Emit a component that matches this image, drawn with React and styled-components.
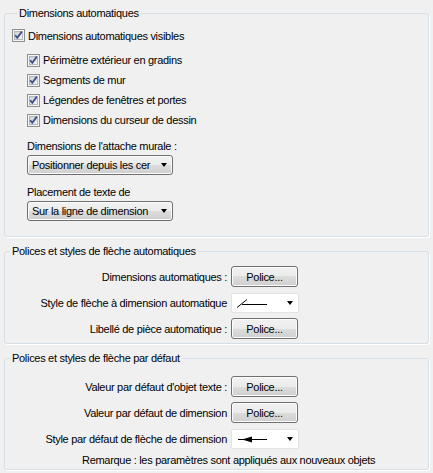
import React from 'react';
import styled, { createGlobalStyle } from 'styled-components';

const GlobalStyle = createGlobalStyle`
  body {
    margin: 0;
    background: #f0f0f0;
    font-family: "Liberation Sans", Arial, sans-serif;
    font-size: 11px;
    letter-spacing: -0.3px;
    color: #000;
  }
`;

const Page = styled.div`
  width: 433px;
  height: 473px;
  box-sizing: border-box;
  padding: 6px 4px 0 4px;
  display: flex;
  flex-direction: column;
  gap: 7px;
`;

const Group = styled.fieldset`
  margin: 0;
  min-width: 0;
  padding: ${p => p.$pad};
  border: 1px solid #d5dfe5;
  border-radius: 3px;
  box-shadow: 1px 1px 0 #fff;
`;

const Legend = styled.legend`
  margin-left: 5px;
  padding: 0 2px;
  line-height: 14px;
`;

const CheckRow = styled.div`
  display: flex;
  align-items: center;
  gap: 3px;
  height: ${p => p.$h}px;
  line-height: 14px;
`;

const SubList = styled.div`
  margin: 6px 0 0 15px;
`;

const FieldLabel = styled.div`
  margin: ${p => p.$top}px 0 0 15px;
  line-height: 14px;
`;

const Select = styled.div`
  margin: 2px 0 0 15px;
  width: 146px;
  height: 20px;
  box-sizing: border-box;
  display: flex;
  align-items: center;
  padding: 0 5px 0 4px;
  border: 1px solid #707070;
  border-radius: 3px;
  background: linear-gradient(#f2f2f2 0%, #ebebeb 50%, #dddddd 50%, #cfcfcf 100%);
  box-shadow: inset 0 0 0 1px #fcfcfc;
`;

const SelectText = styled.span`
  flex: 1;
  overflow: hidden;
  white-space: nowrap;
`;

const Arrow = styled.span`
  width: 0;
  height: 0;
  border-left: 3.5px solid transparent;
  border-right: 3.5px solid transparent;
  border-top: 4px solid #000;
  margin-left: 4px;
`;

const FormRows = styled.div`
  display: flex;
  flex-direction: column;
  gap: 5px;
`;

const FormRow = styled.div`
  display: flex;
  align-items: center;
  height: 21px;
`;

const RowLabel = styled.div`
  width: 226px;
  padding-right: 4px;
  box-sizing: border-box;
  text-align: right;
  white-space: nowrap;
`;

const Button = styled.div`
  width: 67px;
  height: 21px;
  box-sizing: border-box;
  display: flex;
  align-items: center;
  justify-content: center;
  border: 1px solid #707070;
  border-radius: 3px;
  background: linear-gradient(#f2f2f2 0%, #ebebeb 50%, #dddddd 50%, #cfcfcf 100%);
  box-shadow: inset 0 0 0 1px #fcfcfc;
`;

const Combo = styled.div`
  width: 68px;
  height: 20px;
  box-sizing: border-box;
  display: flex;
  align-items: center;
  justify-content: space-between;
  padding: 0 5px 0 3px;
  background: #fff;
  border: 1px solid #e2e3e4;
  border-radius: 2px;
`;

const Note = styled.div`
  margin-top: 4px;
  padding-left: 77px;
  line-height: 14px;
`;

const CheckBox = () => (
  <svg width="13" height="13" viewBox="0 0 13 13">
    <defs>
      <linearGradient id="cbfill" x1="0" y1="0" x2="1" y2="1">
        <stop offset="0" stopColor="#cbcfd5" />
        <stop offset="1" stopColor="#f7f7f7" />
      </linearGradient>
    </defs>
    <rect x="0.5" y="0.5" width="12" height="12" fill="#f4f4f4" stroke="#8e8f8f" />
    <rect x="2.5" y="2.5" width="8" height="8" fill="url(#cbfill)" stroke="#b3b8bf" />
    <path d="M3.2 6.2 L5.3 8.8 L9.8 2.6" stroke="#3c4f8a" strokeWidth="1.8" fill="none" />
  </svg>
);

const Check = ({ h, children }) => (
  <CheckRow $h={h}>
    <CheckBox />
    <span>{children}</span>
  </CheckRow>
);

const TickLine = () => (
  <svg width="34" height="18" viewBox="0 0 34 18">
    <path d="M2 13.5 L12 5.5" stroke="#000" strokeWidth="1" fill="none" />
    <path d="M7 10.5 H32" stroke="#000" strokeWidth="1" fill="none" />
  </svg>
);

const ArrowLine = () => (
  <svg width="34" height="18" viewBox="0 0 34 18">
    <path d="M3 9.5 H32" stroke="#000" strokeWidth="1" fill="none" />
    <path d="M7 9.5 L17 6.5 L17 12.5 Z" fill="#000" />
  </svg>
);

const SubChecks = [
  'Périmètre extérieur en gradins',
  'Segments de mur',
  'Légendes de fenêtres et portes',
  'Dimensions du curseur de dessin',
];

export default function App() {
  return (
    <Page>
      <GlobalStyle />
      <Group $pad="7px 7px 15px 7px">
        <Legend>Dimensions automatiques</Legend>
        <Check h={17}>Dimensions automatiques visibles</Check>
        <SubList>
          {SubChecks.map(t => (
            <Check key={t} h={20}>{t}</Check>
          ))}
        </SubList>
        <FieldLabel $top={9}>Dimensions de l'attache murale :</FieldLabel>
        <Select>
          <SelectText>Positionner depuis les cer</SelectText>
          <Arrow />
        </Select>
        <FieldLabel $top={10}>Placement de texte de</FieldLabel>
        <Select>
          <SelectText>Sur la ligne de dimension</SelectText>
          <Arrow />
        </Select>
      </Group>

      <Group $pad="8px 0 4px 0">
        <Legend>Polices et styles de flèche automatiques</Legend>
        <FormRows>
          <FormRow>
            <RowLabel>Dimensions automatiques :</RowLabel>
            <Button>Police...</Button>
          </FormRow>
          <FormRow>
            <RowLabel>Style de flèche à dimension automatique</RowLabel>
            <Combo>
              <TickLine />
              <Arrow />
            </Combo>
          </FormRow>
          <FormRow>
            <RowLabel>Libellé de pièce automatique :</RowLabel>
            <Button>Police...</Button>
          </FormRow>
        </FormRows>
      </Group>

      <Group $pad="11px 0 2px 0">
        <Legend>Polices et styles de flèche par défaut</Legend>
        <FormRows>
          <FormRow>
            <RowLabel>Valeur par défaut d'objet texte :</RowLabel>
            <Button>Police...</Button>
          </FormRow>
          <FormRow>
            <RowLabel>Valeur par défaut de dimension</RowLabel>
            <Button>Police...</Button>
          </FormRow>
          <FormRow>
            <RowLabel>Style par défaut de flèche de dimension</RowLabel>
            <Combo>
              <ArrowLine />
              <Arrow />
            </Combo>
          </FormRow>
        </FormRows>
        <Note>Remarque : les paramètres sont appliqués aux nouveaux objets</Note>
      </Group>
    </Page>
  );
}
